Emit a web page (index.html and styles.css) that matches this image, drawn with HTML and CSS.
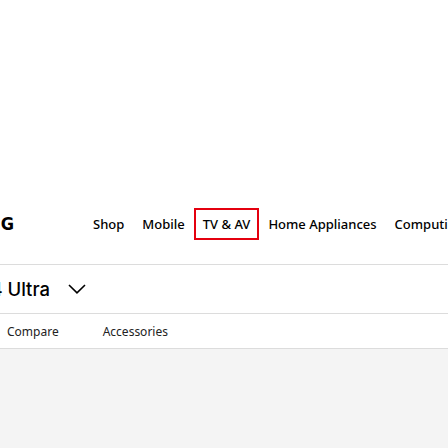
FILE: index.html
```html
<!DOCTYPE html>
<html lang="en">
<head>
<meta charset="utf-8">
<title>Samsung</title>
<link rel="stylesheet" href="styles.css">
</head>
<body>
<div class="page">
  <div class="banner"></div>
  <header class="gnb">
    <div class="logo"><span class="logo-text">SAMSUNG</span></div>
    <nav class="menu">
      <a class="menu-item" href="#">Shop</a>
      <a class="menu-item" href="#">Mobile</a>
      <a class="menu-item is-focused" href="#">TV &amp; AV</a>
      <a class="menu-item" href="#">Home Appliances</a>
      <a class="menu-item" href="#">Computing</a>
    </nav>
  </header>
  <section class="product-bar">
    <div class="product-title">
      <div class="title-clip"><span class="title-text">Galaxy S24 Ultra</span></div>
      <svg class="chevron" width="18" height="10" viewBox="0 0 18 10" aria-hidden="true">
        <path d="M1 1 L9 8.8 L17 1" fill="none" stroke="#000" stroke-width="1.6"/>
      </svg>
    </div>
  </section>
  <nav class="sub-nav">
    <a class="sub-item" href="#">Compare</a>
    <a class="sub-item" href="#">Accessories</a>
  </nav>
  <div class="content"></div>
</div>
</body>
</html>
```
FILE: styles.css
```css
* { box-sizing: border-box; }
html, body { margin: 0; padding: 0; }
body {
  background: #fff;
  color: #000;
  font-family: "Noto Sans", "Open Sans", sans-serif;
  overflow: hidden;
}
a { color: inherit; text-decoration: none; }
.page { width: 448px; height: 448px; display: flex; flex-direction: column; }
.banner { height: 208px; flex: none; }

.gnb {
  height: 32px;
  display: flex;
  align-items: center;
  flex: none;
}
.logo {
  width: 14px;
  flex: none;
  overflow: hidden;
  direction: rtl;
  white-space: nowrap;
  line-height: 32px;
}
.logo-text {
  font-family: "DejaVu Sans", sans-serif;
  font-stretch: condensed;
  font-weight: 700;
  font-size: 18px;
  color: #000;
}
.menu {
  display: flex;
  margin-left: 70px;
  height: 32px;
  white-space: nowrap;
}
.menu-item {
  display: flex;
  align-items: center;
  padding: 0 7px;
  font-size: 13px;
  font-weight: 500;
  color: #000;
  border: 2px solid transparent;
}
.menu-item.is-focused { border-color: #e4000f; }

.product-bar {
  margin-top: 24px;
  height: 50px;
  border-top: 1px solid #dcdcdc;
  border-bottom: 1px solid #dcdcdc;
  display: flex;
  align-items: center;
  flex: none;
}
.product-title { display: flex; align-items: center; }
.title-clip {
  width: 50px;
  overflow: hidden;
  direction: rtl;
  white-space: nowrap;
}
.title-text {
  font-family: "Inter", sans-serif;
  font-weight: 500;
  font-size: 18.5px;
}
.chevron { margin-left: 18px; }

.sub-nav {
  height: 35px;
  display: flex;
  align-items: center;
  padding-left: 7px;
  gap: 44px;
  border-bottom: 1px solid #dcdcdc;
  flex: none;
}
.sub-item { font-size: 12px; color: #222; }
.content { flex: 1; background: #f4f4f4; }
```
